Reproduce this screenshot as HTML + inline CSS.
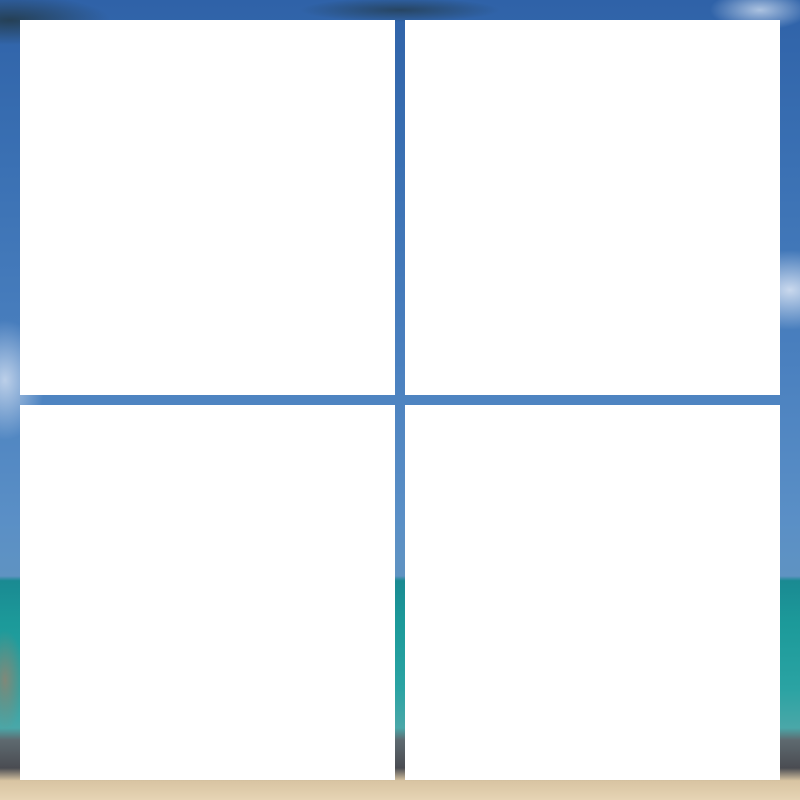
<!DOCTYPE html>
<html><head><meta charset="utf-8"><style>
html,body{margin:0;padding:0;width:800px;height:800px;overflow:hidden}
body{position:relative;background:linear-gradient(180deg,#2f62a8 0%,#3a70b3 20%,#4a80bf 45%,#5a8fc6 65%,#5f93c2 72%,#1a8a92 72.6%,#1c9a9a 78%,#2aa3a3 86%,#4aa7a8 91%,#5e6a70 92.5%,#4a4c52 96%,#d8c4a2 97.6%,#e6d4b4 100%)}
.c{position:absolute;width:100%;height:100%;background:radial-gradient(ellipse 60px 40px at 790px 290px,rgba(235,240,250,.8),transparent),radial-gradient(ellipse 40px 60px at 5px 380px,rgba(235,240,250,.7),transparent),radial-gradient(ellipse 50px 20px at 760px 10px,rgba(225,235,248,.7),transparent),radial-gradient(ellipse 100px 25px at 10px 20px,rgba(30,40,30,.6),transparent),radial-gradient(ellipse 100px 12px at 400px 10px,rgba(30,40,30,.5),transparent),radial-gradient(ellipse 20px 50px at 5px 680px,rgba(150,130,110,.8),transparent)}
.b{position:absolute;background:#fff;width:375px;height:375px}
</style></head><body>
<div class="c"></div>
<div class="b" style="left:20px;top:20px"></div>
<div class="b" style="left:405px;top:20px"></div>
<div class="b" style="left:20px;top:405px"></div>
<div class="b" style="left:405px;top:405px"></div>
</body></html>
